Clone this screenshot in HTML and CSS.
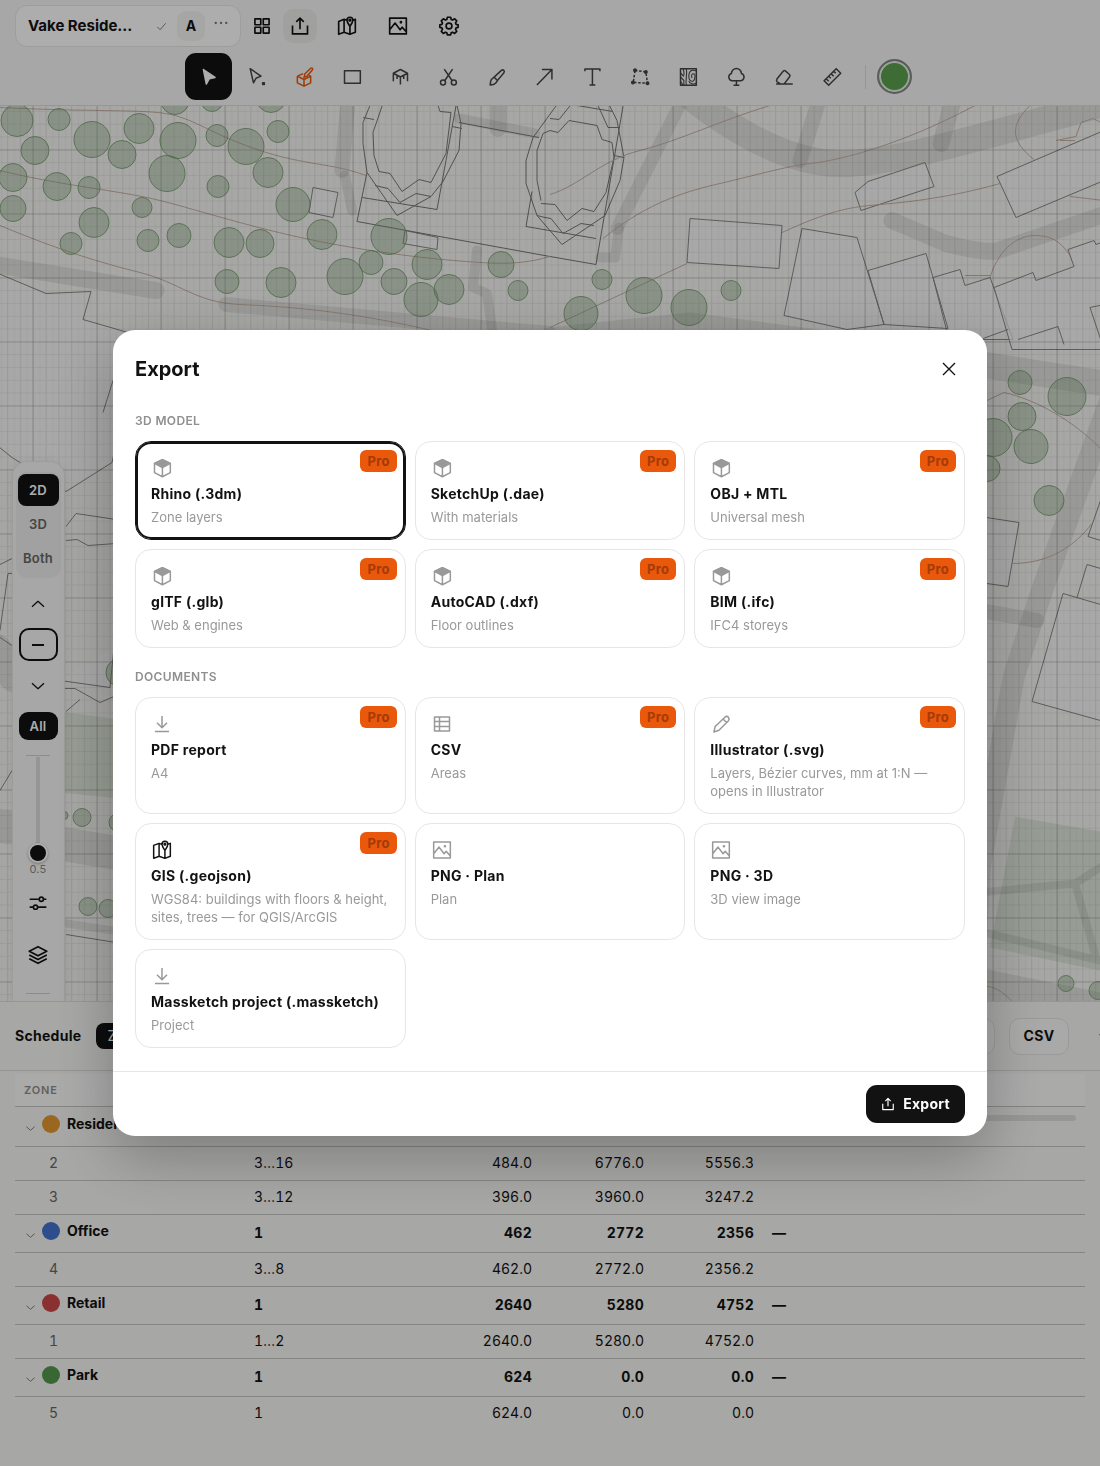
FILE: index.html
```html
<!DOCTYPE html>
<html lang="en">
<head>
<meta charset="utf-8">
<meta name="viewport" content="width=device-width, initial-scale=1">
<title>Massketch</title>
<link rel="stylesheet" href="styles.css">
</head>
<body>
<svg class="sprite" aria-hidden="true">
  <symbol id="i-check" viewBox="0 0 24 24"><path d="M3 13l6 6L21 5"/></symbol>
  <symbol id="i-dots" viewBox="0 0 24 24"><g fill="currentColor" stroke="none"><circle cx="3" cy="12" r="2"/><circle cx="12" cy="12" r="2"/><circle cx="21" cy="12" r="2"/></g></symbol>
  <symbol id="i-grid" viewBox="0 0 24 24"><path d="M3.500 3.500h7v7h-7zM13.500 3.500h7v7h-7zM3.500 13.500h7v7h-7zM13.500 13.500h7v7h-7z"/></symbol>
  <symbol id="i-share" viewBox="0 0 24 24"><path d="M3 11.500v10h18v-10M12 16V2.500M7.500 7L12 2.500 16.500 7"/></symbol>
  <symbol id="i-map" viewBox="0 0 24 24"><path d="M12.500 5.500L8.500 4 2 6.500v15.500l6.500-2.500 7 2.500 6.500-2.500V4l-2.500 1M8.500 4v15.500M15.500 12.500V22M15.500 12.500c-2-3-3.500-5-3.500-7.500a3.500 3.500 0 017 0c0 2.500-1.500 4.500-3.500 7.500z"/><circle cx="15.500" cy="5" r="1"/></symbol>
  <symbol id="i-image" viewBox="0 0 24 24"><path d="M2 2.500h20v19H2zM2.500 16l6-7.500 6 8 2.500-3 4.500 5"/><circle cx="15.500" cy="7.500" r=".7" fill="currentColor"/></symbol>
  <symbol id="i-gear" viewBox="0 0 24 24"><circle cx="12" cy="12" r="3.500"/><path d="M10 1.500h4l.6 2.700 1.700.7 2.500-1.500 2.500 2.500-1.500 2.500.7 1.700 2.500.5v3l-2.500.6-.7 1.700 1.500 2.500-2.500 2.500-2.500-1.500-1.700.7-.6 2.600h-4l-.6-2.600-1.700-.7-2.500 1.500-2.500-2.500 1.500-2.500-.7-1.700L1 13.600v-3l2.500-.5.7-1.700L2.700 5.900l2.500-2.500 2.500 1.500 1.700-.7z"/></symbol>
  <symbol id="i-pointer" viewBox="0 0 24 24"><path fill="currentColor" d="M6.500 3l14 9.500-7 1.500-3.500 6.500z"/></symbol>
  <symbol id="i-node" viewBox="0 0 24 24"><path d="M5 2l13 9-6 2.500L9 19z"/><path d="M20 19h2v2h-2z" fill="currentColor"/></symbol>
  <symbol id="i-boxpen" viewBox="0 0 24 24"><path d="M4 11l7-3M4 11v8l8 4 8-4v-8l-2-1M4 11l8 4 8-4M12 15v8M12 12.500l1-4L20 1.500c1.500-1 3 .5 2 2l-6.500 7.500z"/></symbol>
  <symbol id="i-rect" viewBox="0 0 24 24"><path d="M3 4.500h19v15H3z"/></symbol>
  <symbol id="i-pavilion" viewBox="0 0 24 24"><path d="M12.500 3L21 7.500 12.500 12 4 7.500zM4 7.500V17M21 7.500V17M12.500 12v9M8.500 10v4.500M16.500 10v4.500"/></symbol>
  <symbol id="i-cut" viewBox="0 0 24 24"><circle cx="6" cy="18.500" r="3"/><circle cx="19" cy="18.500" r="3"/><path d="M8 16.500L17.500 2.500M17 16.500L7.500 2.500"/></symbol>
  <symbol id="i-brush" viewBox="0 0 24 24"><path d="M12 10l6.500-6c2-1.500 4.500.5 3 3L15.500 14l-4 5.500c-2 2-4 2-6.500 2 .5-2 0-4.500 1.500-6.500zM10 12.500l3.500 3.500"/></symbol>
  <symbol id="i-arrow" viewBox="0 0 24 24"><path d="M3.500 21.500L21.500 3M9.500 3h12v12"/></symbol>
  <symbol id="i-text" viewBox="0 0 24 24"><path d="M3.500 5V2.500h18V5M12.500 2.500v19M9 21.500h7"/></symbol>
  <symbol id="i-vertex" viewBox="0 0 24 24"><path d="M6 4l13 2 2 13.500-17-1z" stroke-dasharray="3 2"/><g fill="currentColor"><circle cx="6" cy="4" r="1.500"/><circle cx="19" cy="6" r="1.500"/><circle cx="21" cy="19.500" r="1.500"/><circle cx="3.500" cy="18.500" r="1.500"/></g></symbol>
  <symbol id="i-texture" viewBox="0 0 24 24"><path d="M3 2h19v20H3z"/><path stroke-width="1.300" d="M6.500 2c0 4 2 6 0 9L3 7M10 2c1.500 7-1.500 12 0 20M3 12l4 4v6M22 5c-3-2-9-2-9 6 0 7 6 8 7 3s0-6-2-6-2 4-1 5M22 19c-2 2-8 2-9-2M3 17l3 5"/></symbol>
  <symbol id="i-tree" viewBox="0 0 24 24"><path d="M7 16.500a4.500 4.500 0 01-.5-8.700 6 6 0 0112 0 4.500 4.500 0 01-.5 8.700zM12.500 16.500V22M9 22h7"/></symbol>
  <symbol id="i-eraser" viewBox="0 0 24 24"><path d="M2.500 20.500h20M8 20.500l-4.500-3c-1-1-.5-2 0-3L11 5c1-1 2-1 3 0l4.500 4c1 1 1 2 0 3L12 20.500"/></symbol>
  <symbol id="i-ruler" viewBox="0 0 24 24"><path d="M17 2l5.500 5.500L8 22l-5.500-5.500zM14 5l2.500 2.500M11 8l3 3M8 11l2.500 2.500M5 14l3 3"/></symbol>
  <symbol id="i-up" viewBox="0 0 24 24"><path d="M3 16l9-8 9 8"/></symbol>
  <symbol id="i-down" viewBox="0 0 24 24"><path d="M3 8l9 8 9-8"/></symbol>
  <symbol id="i-minus" viewBox="0 0 24 24"><path d="M3 12h18" stroke-width="3"/></symbol>
  <symbol id="i-sliders" viewBox="0 0 24 24"><path d="M2 7.500h11M18.500 7.500H22M2 17h4M11.500 17H22"/><circle cx="16" cy="7.500" r="2.500"/><circle cx="9" cy="17" r="2.500"/></symbol>
  <symbol id="i-layers" viewBox="0 0 24 24"><path d="M12 2l10.500 5.500L12 13 1.500 7.500zM1.500 12L12 17.500 22.500 12M1.500 16.500L12 22l10.500-5.500"/></symbol>
  <symbol id="i-close" viewBox="0 0 24 24"><path d="M3 3l18 18M21 3L3 21"/></symbol>
  <symbol id="i-cube" viewBox="0 0 24 24"><path d="M12.500 2L22 6.500v11l-9.500 5-9.500-5v-11zM12.500 11.500v11"/><path d="M12.500 2L22 6.500l-9.500 5-9.500-5z" fill="currentColor"/></symbol>
  <symbol id="i-download" viewBox="0 0 24 24"><path d="M12 2.500V16M6 10.500l6 6 6-6M3.500 21h17"/></symbol>
  <symbol id="i-table" viewBox="0 0 24 24"><path d="M3 3.500h18v17H3zM9 3.500v17M3 9h18M3 15h18"/></symbol>
  <symbol id="i-pencil" viewBox="0 0 24 24"><path d="M3.500 21.500L5 15 17 3.500c3-2 6 1.500 4 4.500L9.500 19.500zM14.500 6l4.500 4.500"/></symbol>
</svg>

<div class="app">
  <header class="topbar">
    <div class="topbar-row">
      <div class="project">
        <span class="project-name">Vake Reside...</span>
        <svg class="icon icon-xs muted"><use href="#i-check"/></svg>
        <button class="project-user" type="button">A</button>
        <button class="project-more" type="button" aria-label="More"><svg class="icon icon-sm muted"><use href="#i-dots"/></svg></button>
      </div>
      <button class="menu-btn" type="button" aria-label="Projects"><svg class="icon"><use href="#i-grid"/></svg></button>
      <button class="menu-btn is-open" type="button" aria-label="Share"><svg class="icon"><use href="#i-share"/></svg></button>
      <div class="menu-group">
        <button class="menu-btn wide" type="button" aria-label="Map"><svg class="icon"><use href="#i-map"/></svg></button>
        <button class="menu-btn wide" type="button" aria-label="Images"><svg class="icon"><use href="#i-image"/></svg></button>
        <button class="menu-btn wide" type="button" aria-label="Settings"><svg class="icon"><use href="#i-gear"/></svg></button>
      </div>
    </div>
    <div class="tools">
      <button class="tool is-active" type="button" aria-label="Select"><svg class="icon"><use href="#i-pointer"/></svg></button>
      <button class="tool" type="button" aria-label="Edit nodes"><svg class="icon"><use href="#i-node"/></svg></button>
      <button class="tool accent" type="button" aria-label="Draw volume"><svg class="icon"><use href="#i-boxpen"/></svg></button>
      <button class="tool" type="button" aria-label="Rectangle"><svg class="icon"><use href="#i-rect"/></svg></button>
      <button class="tool" type="button" aria-label="Pavilion"><svg class="icon"><use href="#i-pavilion"/></svg></button>
      <button class="tool" type="button" aria-label="Cut"><svg class="icon"><use href="#i-cut"/></svg></button>
      <button class="tool" type="button" aria-label="Brush"><svg class="icon"><use href="#i-brush"/></svg></button>
      <button class="tool" type="button" aria-label="Arrow"><svg class="icon"><use href="#i-arrow"/></svg></button>
      <button class="tool" type="button" aria-label="Text"><svg class="icon"><use href="#i-text"/></svg></button>
      <button class="tool" type="button" aria-label="Site outline"><svg class="icon"><use href="#i-vertex"/></svg></button>
      <button class="tool" type="button" aria-label="Texture"><svg class="icon"><use href="#i-texture"/></svg></button>
      <button class="tool" type="button" aria-label="Tree"><svg class="icon"><use href="#i-tree"/></svg></button>
      <button class="tool" type="button" aria-label="Eraser"><svg class="icon"><use href="#i-eraser"/></svg></button>
      <button class="tool" type="button" aria-label="Measure"><svg class="icon"><use href="#i-ruler"/></svg></button>
      <span class="tools-divider"></span>
      <button class="swatch" type="button" aria-label="Zone colour"></button>
    </div>
  </header>

  <main class="map">
    <svg class="map-canvas" viewBox="0 105 1100 896" preserveAspectRatio="xMidYMid slice" aria-hidden="true">
      <defs>
        <pattern id="fine" x="1" y="8.500" width="6.400" height="12.800" patternUnits="userSpaceOnUse"><path d="M.5 0v12.800" class="grid-faint"/></pattern>
        <pattern id="minor" x="7" y="8" width="12.800" height="12.800" patternUnits="userSpaceOnUse"><path d="M.5 0v12.800M0 .5h12.800" class="grid-minor"/></pattern>
        <pattern id="major" x="32.500" y="21" width="64" height="64" patternUnits="userSpaceOnUse"><path d="M.5 0v64M0 .5h64" class="grid-major"/></pattern>
      </defs>
      <g class="park">
        <path d="M60 711l60 8v79l-60-6zM1015 816l85 15v139l-110-23z"/>
      </g>
      <g class="road">
        <path stroke-width="27" d="M690 96C740 135 790 162 838 163S950 145 1104 103"/>
        <path stroke-width="13" d="M682 100L617 228"/>
        <path stroke-width="15" d="M819 100l-19 60"/>
        <path stroke-width="17" d="M953 100l-12 43M892 220l54 23q30 8 49 8l109-37M-5 264l161 26M498 100v28"/>
        <path stroke-width="15" d="M226 304L550 333M348 100l-6 70M980 610l57 10"/>
        <path stroke-width="10" d="M345 175l7 35M477 250l-4 37 14 6 5 35M459 118l76 15M600 257h15l4-30"/>
        <path stroke-width="26" d="M550 340l140-15 298 40 116 18"/>
        <path stroke-width="22" d="M1110 400l-68 190-28 85-34 190-5 90"/>
        <path stroke-width="34" d="M-5 650l20 25M-5 825l20 2M60 843l60 10M980 985l125 25"/>
        <path stroke-width="8" d="M980 892l95-9 30-19M1075 883l20 70M980 931l120 29M60 922l60 9"/>
      </g>
      <g class="building">
        <path d="M-4 272l50 21 45-2-8 28 45 13v60l-16 70-46 29-54-34-16-13z"/>
        <path d="M313 187l25 5-5 25-24-5zM405 230l-2 13 34 6 1-12z"/>
        <path d="M690 218l92 7-3 43-92-6zM802 228l55 9 27 87-37 5-63-14zM868 270l58-17 22 75-64-4zM933 277l27-8 5 16 25-8 23 62h-64z"/>
        <path d="M994 287l39-15 3 8 38-14-6-17 26-9 2 4 8-3v63l-14 3 14 42h-92zM983 338l25-9M1018 339l40-13 6 18"/>
        <path d="M1104 130l-107 46 19 41 88-37zM855 192l13-11 57-19 9 24-73 24z"/>
        <path d="M980 516l39 6-11 64-28-4M1104 490l-16 46 16 5M1104 569l-17-5-10 33M1104 605l-41-12-31 108 72 20"/>
        <path d="M66 526l10-13 40 6M66 540l11-1 11 6 28-2M0 564l12-6M0 630l8-57h6M60 680l50 7 4-40M60 688h15l25 14 14-6M66 711l14-12M66 934l50 8M0 790l12-20M103 412l10-32M0 637l12 8"/>
      </g>
      <g class="outline">
        <path d="M367 172l-10 49 193 35 46 8 28-164M362 197l75 12 20-109M459 122l80 15M526 226l70 12"/>
        <path d="M372 100l-9 22v21l4 29 14 20 16 23 34-19 12-15 16-31 2-27-5-23"/>
        <path d="M384 100l-11 32 1 23 5 16 11 2 12 18 17-12 12 3 15-29 5-41-11-1-4-12M375 185l13 3 12 14 16-9 15 3M452 126l10 2M363 117l11 2"/>
        <path d="M560 100l-27 37-7 23v23l11 32 25 29 43-29 15-35 4-23-7-37-10-20"/>
        <path d="M541 200l-4-20v-30l6-17 7-3 8 2 11-12 28 5 5 14 10 3 2 15-8 35-12 19-12-3-15 12-12-16-14-1M545 217l6 1 12 15 18-10 13 2M550 118l9 1 12-15 42 7M598 105l10 22h12M614 155l10 2M526 226l6-35M545 217l-8-2"/>
      </g>
      <g class="contour">
        <path d="M0 107c100 5 150 1 175 8s40 20 85 35 70 12 106 25M0 170c60 15 120 20 160 30s100 30 170 43 120 17 150 19 50 0 70-6M0 225c60 25 100 37 140 47s55 30 100 32 110 6 200 28"/>
        <path d="M550 194c30-9 50-34 90-44s80-30 130-45M603 238c47-38 87-48 117-55s70-18 90-20 80-13 165-58M550 327l137-64M782 232c48-22 68-25 88-27s70-5 130-22"/>
        <path d="M990 277c10-32 30-42 45-42s25 5 35 20M965 275h25M1030 105c-20 20-20 35 4 54M1060 140h15M1056 140l20-4 5-14 12-4 12 6M1070 196l34 4M987 400l17-8c36 8 76 33 100 60M1012 563c38 0 63-18 80-40M980 985c15 0 25 8 32 16"/>
      </g>
      <rect y="105" width="1100" height="896" fill="url(#fine)"/>
      <rect y="105" width="1100" height="896" fill="url(#minor)"/>
      <rect y="105" width="1100" height="896" fill="url(#major)"/>
      <g class="tree">
        <circle cx="17" cy="120" r="16"/><circle cx="59" cy="119" r="11"/><circle cx="35" cy="150" r="14"/><circle cx="92" cy="139" r="18"/><circle cx="139" cy="128" r="15"/><circle cx="122" cy="154" r="14"/><circle cx="178" cy="140" r="18"/><circle cx="217" cy="135" r="11"/><circle cx="246" cy="146" r="18"/><circle cx="278" cy="131" r="11"/>
        <circle cx="175" cy="100" r="14"/><circle cx="212" cy="100" r="11"/><circle cx="271" cy="97" r="15"/>
        <circle cx="13" cy="177" r="14"/><circle cx="57" cy="186" r="14"/><circle cx="89" cy="187" r="11"/><circle cx="167" cy="173" r="18"/><circle cx="218" cy="186" r="11"/><circle cx="268" cy="172" r="15"/><circle cx="293" cy="204" r="17"/>
        <circle cx="13" cy="208" r="13"/><circle cx="94" cy="222" r="15"/><circle cx="142" cy="207" r="10"/><circle cx="71" cy="243" r="11"/><circle cx="148" cy="240" r="11"/><circle cx="179" cy="235" r="12"/><circle cx="229" cy="242" r="15"/><circle cx="260" cy="243" r="14"/><circle cx="322" cy="234" r="15"/>
        <circle cx="227" cy="281" r="12"/><circle cx="281" cy="282" r="15"/><circle cx="345" cy="276" r="18"/><circle cx="371" cy="262" r="12"/><circle cx="389" cy="236" r="18"/><circle cx="427" cy="264" r="15"/><circle cx="394" cy="281" r="13"/><circle cx="421" cy="299" r="17"/><circle cx="449" cy="289" r="15"/><circle cx="501" cy="264" r="13"/><circle cx="518" cy="290" r="10"/>
        <circle cx="581" cy="313" r="17"/><circle cx="602" cy="279" r="10"/><circle cx="644" cy="295" r="18"/><circle cx="689" cy="307" r="18"/><circle cx="731" cy="290" r="10"/>
        <circle cx="1020" cy="382" r="12"/><circle cx="1067" cy="396" r="19"/><circle cx="1022" cy="416" r="14"/><circle cx="993" cy="437" r="19"/><circle cx="1031" cy="446" r="17"/><circle cx="987" cy="468" r="13"/><circle cx="1049" cy="500" r="15"/>
        <circle cx="1066" cy="983" r="8"/><circle cx="1098" cy="990" r="9"/>
        <circle cx="64" cy="815" r="4"/><circle cx="82" cy="817" r="9"/><circle cx="118" cy="822" r="9"/><circle cx="88" cy="906" r="9"/><circle cx="108" cy="908" r="9"/><circle cx="120" cy="672" r="14"/>
      </g>
    </svg>

    <aside class="side">
      <div class="segment">
        <button class="seg is-active" type="button">2D</button>
        <button class="seg" type="button">3D</button>
        <button class="seg" type="button">Both</button>
      </div>
      <button class="side-btn" type="button" aria-label="Floor up"><svg class="icon icon-md"><use href="#i-up"/></svg></button>
      <button class="side-btn boxed" type="button" aria-label="Current floor"><svg class="icon icon-md"><use href="#i-minus"/></svg></button>
      <button class="side-btn" type="button" aria-label="Floor down"><svg class="icon icon-md"><use href="#i-down"/></svg></button>
      <button class="side-all" type="button">All</button>
      <span class="side-rule"></span>
      <input class="opacity" type="range" min="0" max="10" value="0" aria-label="Opacity">
      <span class="opacity-value">0.5</span>
      <button class="side-tool" type="button" aria-label="Adjust"><svg class="icon"><use href="#i-sliders"/></svg></button>
      <button class="side-tool" type="button" aria-label="Layers"><svg class="icon"><use href="#i-layers"/></svg></button>
      <span class="side-rule"></span>
    </aside>
  </main>

  <section class="schedule">
    <div class="schedule-head">
      <h2 class="schedule-title">Schedule</h2>
      <button class="pill" type="button">Zones</button>
      <div class="schedule-actions">
        <button class="outline-btn" type="button" aria-label="Copy"></button>
        <button class="outline-btn" type="button">CSV</button>
        <button class="collapse" type="button" aria-label="Collapse"><svg class="icon icon-xs"><use href="#i-down"/></svg></button>
      </div>
    </div>
    <div class="table-wrap">
      <table class="zones">
        <colgroup><col class="c-zone"><col class="c-floors"><col class="c-foot"><col class="c-gross"><col class="c-net"><col></colgroup>
        <thead><tr><th scope="col">Zone</th><td></td><td></td><td></td><td></td><td></td></tr></thead>
        <tbody>
          <tr class="group tall"><th scope="row"><span class="zone"><svg class="icon icon-xs chev"><use href="#i-down"/></svg><i class="dot amber"></i>Residential</span></th><td></td><td></td><td></td><td></td><td><div class="bar"></div></td></tr>
          <tr><th scope="row">2</th><td>3…16</td><td class="num">484.0</td><td class="num">6776.0</td><td class="num">5556.3</td><td></td></tr>
          <tr><th scope="row">3</th><td>3…12</td><td class="num">396.0</td><td class="num">3960.0</td><td class="num">3247.2</td><td></td></tr>
          <tr class="group"><th scope="row"><span class="zone"><svg class="icon icon-xs chev"><use href="#i-down"/></svg><i class="dot blue"></i>Office</span></th><td>1</td><td class="num">462</td><td class="num">2772</td><td class="num">2356</td><td>—</td></tr>
          <tr><th scope="row">4</th><td>3…8</td><td class="num">462.0</td><td class="num">2772.0</td><td class="num">2356.2</td><td></td></tr>
          <tr class="group"><th scope="row"><span class="zone"><svg class="icon icon-xs chev"><use href="#i-down"/></svg><i class="dot red"></i>Retail</span></th><td>1</td><td class="num">2640</td><td class="num">5280</td><td class="num">4752</td><td>—</td></tr>
          <tr><th scope="row">1</th><td>1…2</td><td class="num">2640.0</td><td class="num">5280.0</td><td class="num">4752.0</td><td></td></tr>
          <tr class="group"><th scope="row"><span class="zone"><svg class="icon icon-xs chev"><use href="#i-down"/></svg><i class="dot green"></i>Park</span></th><td>1</td><td class="num">624</td><td class="num">0.0</td><td class="num">0.0</td><td>—</td></tr>
          <tr><th scope="row">5</th><td>1</td><td class="num">624.0</td><td class="num">0.0</td><td class="num">0.0</td><td></td></tr>
        </tbody>
      </table>
    </div>
  </section>
</div>

<div class="scrim">
  <div class="dialog" role="dialog" aria-modal="true" aria-labelledby="export-title">
    <div class="dialog-head">
      <h1 class="dialog-title" id="export-title">Export</h1>
      <button class="close" type="button" aria-label="Close"><svg class="icon icon-md"><use href="#i-close"/></svg></button>
    </div>
    <div class="dialog-body">
      <h2 class="label">3D model</h2>
      <div class="cards">
        <button class="card is-selected" type="button"><svg class="icon card-icon"><use href="#i-cube"/></svg><span class="card-title">Rhino (.3dm)</span><span class="card-text">Zone layers</span><span class="badge">Pro</span></button>
        <button class="card" type="button"><svg class="icon card-icon"><use href="#i-cube"/></svg><span class="card-title">SketchUp (.dae)</span><span class="card-text">With materials</span><span class="badge">Pro</span></button>
        <button class="card" type="button"><svg class="icon card-icon"><use href="#i-cube"/></svg><span class="card-title">OBJ + MTL</span><span class="card-text">Universal mesh</span><span class="badge">Pro</span></button>
        <button class="card" type="button"><svg class="icon card-icon"><use href="#i-cube"/></svg><span class="card-title">glTF (.glb)</span><span class="card-text">Web &amp; engines</span><span class="badge">Pro</span></button>
        <button class="card" type="button"><svg class="icon card-icon"><use href="#i-cube"/></svg><span class="card-title">AutoCAD (.dxf)</span><span class="card-text">Floor outlines</span><span class="badge">Pro</span></button>
        <button class="card" type="button"><svg class="icon card-icon"><use href="#i-cube"/></svg><span class="card-title">BIM (.ifc)</span><span class="card-text">IFC4 storeys</span><span class="badge">Pro</span></button>
      </div>
      <h2 class="label label-next">Documents</h2>
      <div class="cards">
        <button class="card" type="button"><svg class="icon card-icon"><use href="#i-download"/></svg><span class="card-title">PDF report</span><span class="card-text">A4</span><span class="badge">Pro</span></button>
        <button class="card" type="button"><svg class="icon card-icon"><use href="#i-table"/></svg><span class="card-title">CSV</span><span class="card-text">Areas</span><span class="badge">Pro</span></button>
        <button class="card" type="button"><svg class="icon card-icon"><use href="#i-pencil"/></svg><span class="card-title">Illustrator (.svg)</span><span class="card-text">Layers, Bézier curves, mm at 1:N — opens in Illustrator</span><span class="badge">Pro</span></button>
        <button class="card" type="button"><svg class="icon card-icon strong"><use href="#i-map"/></svg><span class="card-title">GIS (.geojson)</span><span class="card-text">WGS84: buildings with floors &amp; height, sites, trees — for QGIS/ArcGIS</span><span class="badge">Pro</span></button>
        <button class="card" type="button"><svg class="icon card-icon"><use href="#i-image"/></svg><span class="card-title">PNG · Plan</span><span class="card-text">Plan</span></button>
        <button class="card" type="button"><svg class="icon card-icon"><use href="#i-image"/></svg><span class="card-title">PNG · 3D</span><span class="card-text">3D view image</span></button>
        <button class="card" type="button"><svg class="icon card-icon"><use href="#i-download"/></svg><span class="card-title">Massketch project (.massketch)</span><span class="card-text">Project</span></button>
      </div>
    </div>
    <div class="dialog-foot">
      <button class="primary" type="button"><svg class="icon icon-sm"><use href="#i-share"/></svg>Export</button>
    </div>
  </div>
</div>
</body>
</html>
```
FILE: styles.css
```css
:root {
  --ink: #121212;
  --muted: #8f8f8f;
  --line: #e6e6e6;
  --accent: #ea580c;
  --bar: #f7f7f6;
}

* { box-sizing: border-box; }

body {
  margin: 0;
  font: 14px/20px Inter, "Liberation Sans", sans-serif;
  letter-spacing: 0.02em;
  color: var(--ink);
}

h1, h2 { margin: 0; }

button {
  font: inherit;
  letter-spacing: inherit;
  color: inherit;
  background: none;
  border: 0;
  padding: 0;
  display: flex;
  align-items: center;
  justify-content: center;
}

.sprite { position: absolute; width: 0; height: 0; }

.icon {
  width: 20px;
  height: 20px;
  flex: none;
  fill: none;
  stroke: currentColor;
  stroke-width: 2;
  stroke-linejoin: round;
}
.icon-md { width: 16px; height: 16px; }
.icon-sm { width: 14px; height: 14px; }
.icon-xs { width: 11px; height: 11px; }
.muted { color: #777; }

.app {
  display: flex;
  flex-direction: column;
  min-height: 100vh;
}

/* Top bar */
.topbar {
  background: var(--bar);
  border-bottom: 1px solid #dededc;
  padding: 5px 15px;
}
.topbar-row {
  display: flex;
  align-items: center;
  gap: 4px;
}
.project {
  display: flex;
  align-items: center;
  width: 226px;
  height: 42px;
  padding: 0 12px;
  background: #fff;
  border: 1px solid #e8e8e8;
  border-radius: 12px;
}
.project-name {
  flex: 1;
  font-size: 15px;
  font-weight: 700;
  letter-spacing: 0;
}
.project-user {
  width: 28px;
  height: 30px;
  margin: 0 9px 0 10px;
  border-radius: 9px;
  background: #f5f5f3;
  font-weight: 700;
}
.project-more { height: 28px; align-items: flex-start; padding-top: 4px; }
.menu-btn {
  width: 34px;
  height: 34px;
  border-radius: 10px;
}
.menu-btn.wide { width: 51px; }
.menu-btn.is-open { background: #ececea; }
.menu-group { display: flex; }
.tools {
  display: flex;
  align-items: center;
  justify-content: center;
  gap: 1px;
  padding-top: 6px;
}
.tool {
  width: 47px;
  height: 47px;
  border-radius: 11px;
  color: #444;
}
.tool .icon { stroke-width: 1.8; }
.tool.is-active { background: var(--ink); color: #fff; }
.tool.accent { color: var(--accent); }
.tools-divider {
  width: 1px;
  height: 24px;
  margin: 0 10px 0 8px;
  background: #ddd;
}
.swatch {
  width: 35px;
  height: 35px;
  margin-right: 4px;
  border: 2px solid #888;
  border-radius: 50%;
  background: #5aa14f;
  box-shadow: inset 0 0 0 2px #e4f0e2;
}

/* Map */
.map {
  position: relative;
  flex: 1;
  min-height: 600px;
  overflow: hidden;
  background: #f6f6f4;
}
.map-canvas {
  position: absolute;
  inset: 0;
  width: 100%;
  height: 100%;
}
.grid-faint { stroke: #000; stroke-opacity: 0.03; }
.grid-minor { stroke: #000; stroke-opacity: 0.06; }
.grid-major { stroke: #000; stroke-opacity: 0.14; }
.park { fill: #dfe8db; }
.road { fill: none; stroke: #000; stroke-opacity: 0.08; stroke-linecap: round; stroke-linejoin: round; }
.building { fill: #fafafa; fill-opacity: 0.7; stroke: #8a8a88; }
.outline { fill: none; stroke: #7a7a78; }
.contour { fill: none; stroke: #c9b3a4; }
.tree { fill: #7a9d72; fill-opacity: 0.34; stroke: #739a6c; stroke-opacity: 0.8; }

.side {
  position: absolute;
  left: 12px;
  top: 355px;
  bottom: 0;
  width: 53px;
  overflow: hidden;
  display: flex;
  flex-direction: column;
  align-items: center;
  padding: 10px 1px 0 0;
  background: #f7f7f6;
  border: 1px solid #e6e6e4;
  border-bottom: 0;
  border-radius: 15px 15px 0 0;
  box-shadow: 0 2px 12px rgba(0, 0, 0, 0.08);
}
.segment {
  padding: 2px;
  margin-bottom: 9px;
  border-radius: 11px;
  background: #eeeeed;
}
.seg {
  width: 41px;
  height: 32px;
  margin-bottom: 2px;
  border-radius: 8px;
  font-size: 13px;
  font-weight: 600;
  color: #666;
}
.seg.is-active, .side-all { background: var(--ink); color: #fff; }
.side-btn {
  width: 39px;
  height: 33px;
  margin-bottom: 8px;
  flex: none;
}
.side-btn.boxed {
  border: 2px solid var(--ink);
  border-radius: 10px;
}
.side-all {
  flex: none;
  width: 39px;
  height: 28px;
  margin: 2px 0 15px;
  border-radius: 9px;
  font-size: 13px;
  font-weight: 600;
}
.side-rule {
  flex: none;
  width: 24px;
  height: 1px;
  background: #cfcfcf;
}
.opacity {
  -webkit-appearance: none;
  appearance: none;
  flex: none;
  writing-mode: vertical-lr;
  direction: rtl;
  width: 20px;
  height: 106px;
  margin: 1px 0 0;
  background: linear-gradient(#dcdcdb, #dcdcdb) center / 4px 100% no-repeat;
}
.opacity::-webkit-slider-thumb {
  -webkit-appearance: none;
  width: 20px;
  height: 20px;
  border: 2px solid #fff;
  border-radius: 50%;
  background: var(--ink);
  box-shadow: 0 1px 3px rgba(0, 0, 0, 0.3);
}
.opacity-value {
  font-size: 11px;
  line-height: 12px;
  color: #888;
  margin-bottom: 8px;
}
.side-tool {
  flex: none;
  width: 40px;
  height: 40px;
  margin-bottom: 12px;
}
.side-tool + .side-rule { margin-top: 6px; }

/* Schedule */
.schedule {
  background: #f6f6f3;
  border-top: 1px solid #dededc;
}
.schedule-head {
  display: flex;
  align-items: center;
  height: 69px;
  padding-left: 15px;
  border-bottom: 1px solid #dadad8;
  overflow: hidden;
}
.schedule-title {
  font-size: 14px;
  font-weight: 700;
  margin-right: 15px;
}
.pill {
  height: 26px;
  padding: 0 11px;
  border-radius: 8px;
  background: var(--ink);
  color: #fff;
}
.schedule-actions {
  display: flex;
  align-items: center;
  gap: 14px;
  margin-left: auto;
}
.outline-btn {
  min-width: 60px;
  height: 37px;
  border: 1px solid #e3e3e1;
  border-radius: 11px;
  background: #fafaf9;
  font-weight: 700;
}
.collapse { width: 17px; height: 37px; justify-content: flex-end; overflow: visible; }
.collapse .icon { margin-right: -9px; }
.table-wrap { padding: 3px 15px 36px; }
.zones {
  width: 100%;
  table-layout: fixed;
  border-collapse: collapse;
  font-variant-numeric: tabular-nums;
}
.c-zone { width: 230px; }
.c-floors { width: 150px; }
.c-foot { width: 146px; }
.c-gross { width: 112px; }
.c-net { width: 110px; }
.zones th, .zones td {
  height: 34px;
  padding: 0 9px;
  text-align: left;
  font-weight: 400;
  letter-spacing: 0;
  border-bottom: 1px solid #c4c4c2;
}
.zones tbody tr:last-child th, .zones tbody tr:last-child td { border-bottom: 0; }
.zones thead th, .zones thead td { height: 32px; background: #fbfbfa; }
.zones thead th {
  font-size: 11px;
  font-weight: 600;
  letter-spacing: 0.08em;
  text-transform: uppercase;
  color: var(--muted);
}
.zones tbody th { padding-left: 34px; color: #666; }
.zones .group th { padding-left: 10px; color: var(--ink); font-weight: 700; }
.zones .group td { height: 38px; font-weight: 700; letter-spacing: 0.02em; }
.zones .tall td { height: 40px; }
.zones td.num { text-align: right; }
.zone { display: flex; align-items: center; padding-bottom: 4px; }
.chev { align-self: flex-end; margin-right: 6px; color: #777; }
.dot {
  width: 18px;
  height: 18px;
  margin-right: 7px;
  border-radius: 50%;
}
.amber { background: #e2982f; }
.blue { background: #4472d0; }
.red { background: #cc4848; }
.green { background: #53994c; }
.bar {
  height: 6px;
  margin-bottom: 16px;
  border-radius: 3px;
  background: #dededc;
}

/* Export dialog */
.scrim {
  position: fixed;
  inset: 0;
  display: flex;
  align-items: center;
  justify-content: center;
  padding: 20px;
  background: rgba(0, 0, 0, 0.32);
}
.dialog {
  width: 100%;
  max-width: 874px;
  border-radius: 22px;
  background: #fff;
  box-shadow: 0 20px 60px rgba(0, 0, 0, 0.26);
}
.dialog-head {
  display: flex;
  align-items: center;
  justify-content: space-between;
  height: 83px;
  padding: 0 22px 6px;
}
.dialog-title {
  font-size: 20px;
  line-height: 24px;
  font-weight: 700;
  letter-spacing: 0;
}
.close { width: 33px; height: 33px; }
.dialog-body { padding: 0 22px 23px; }
.label {
  margin-bottom: 12px;
  font-size: 12px;
  line-height: 16px;
  font-weight: 600;
  letter-spacing: 0.03em;
  text-transform: uppercase;
  color: var(--muted);
}
.label-next { margin-top: 21px; }
.cards {
  display: grid;
  grid-template-columns: repeat(3, 1fr);
  gap: 9px;
}
.card {
  position: relative;
  flex-direction: column;
  align-items: flex-start;
  justify-content: flex-start;
  gap: 3px;
  padding: 14px 15px 13px;
  border: 1px solid var(--line);
  border-radius: 16px;
  text-align: left;
}
.card.is-selected {
  border-color: var(--ink);
  box-shadow: inset 0 0 0 2px var(--ink);
}
.card-icon {
  margin: 2px 1px;
  color: #999;
  stroke-width: 1.8;
}
.card-icon.strong { color: var(--ink); }
.card-title {
  line-height: 22px;
  font-weight: 700;
}
.card-text {
  font-size: 13px;
  line-height: 18px;
  letter-spacing: 0;
  color: #999;
}
.badge {
  position: absolute;
  top: 8px;
  right: 8px;
  padding: 0 7px;
  border-radius: 6px;
  background: var(--accent);
  color: #a33b06;
  font-size: 13px;
  line-height: 22px;
  font-weight: 700;
}
.dialog-foot {
  display: flex;
  justify-content: flex-end;
  padding: 13px 22px;
  border-top: 1px solid var(--line);
}
.primary {
  gap: 8px;
  height: 38px;
  padding: 0 15px;
  border-radius: 11px;
  background: var(--ink);
  color: #fff;
  font-weight: 700;
}
```
